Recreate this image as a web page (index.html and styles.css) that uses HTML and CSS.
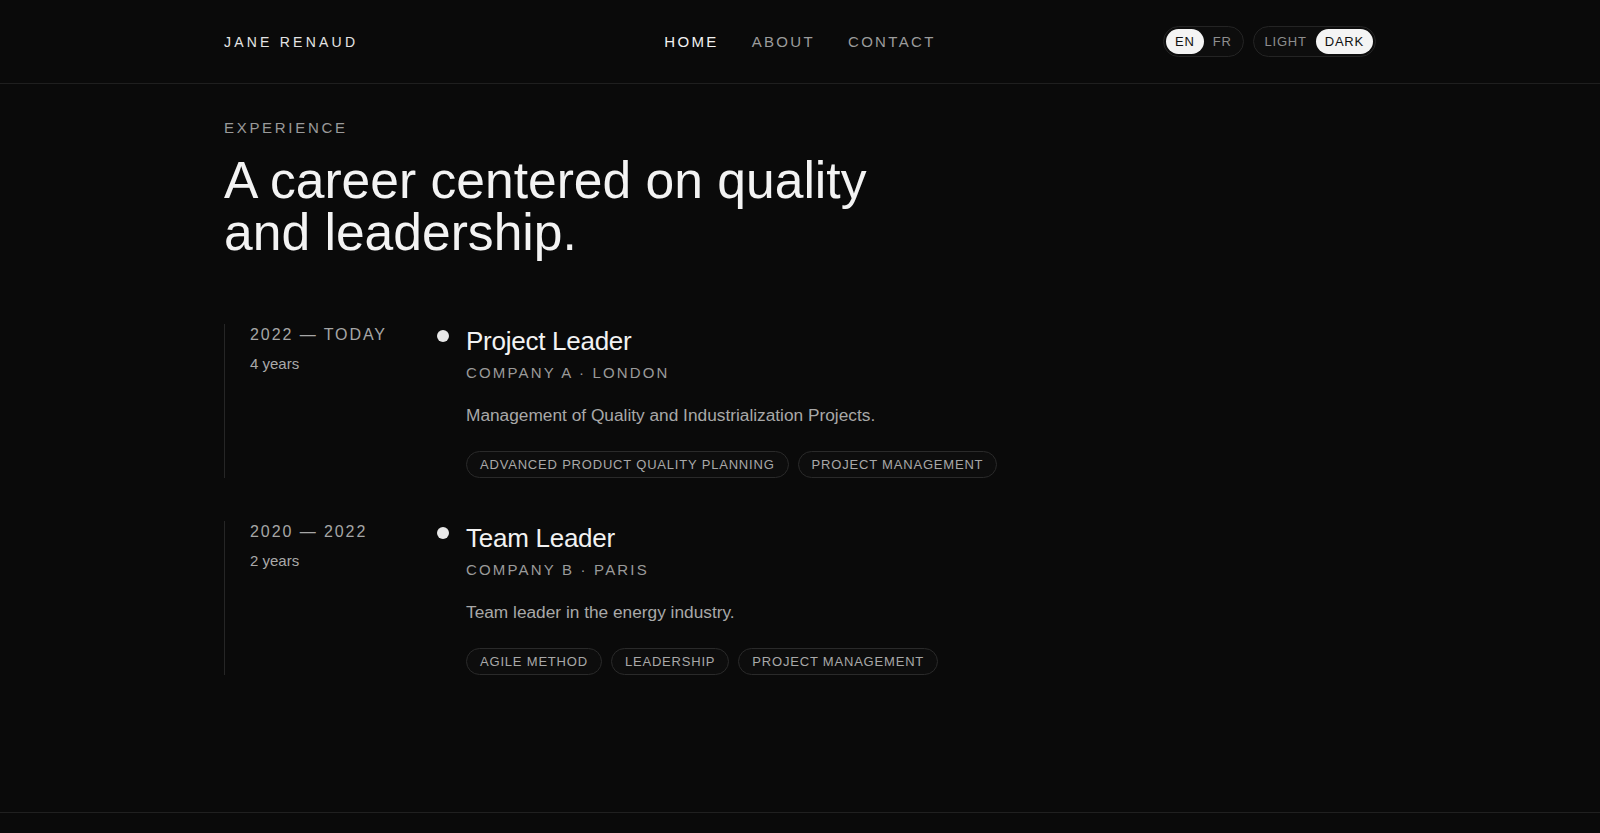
FILE: index.html
```html
<!DOCTYPE html>
<html lang="en">
<head>
<meta charset="utf-8">
<title>Jane Renaud — Experience</title>
<link rel="stylesheet" href="styles.css">
</head>
<body>
<header class="site-header">
  <div class="header-inner">
    <a class="brand" href="#">JANE RENAUD</a>
    <nav class="nav">
      <a class="nav-link is-active" href="#">HOME</a>
      <a class="nav-link" href="#">ABOUT</a>
      <a class="nav-link" href="#">CONTACT</a>
    </nav>
    <div class="toggles">
      <div class="pill">
        <button class="pill-btn is-on">EN</button>
        <button class="pill-btn">FR</button>
      </div>
      <div class="pill">
        <button class="pill-btn">LIGHT</button>
        <button class="pill-btn is-on">DARK</button>
      </div>
    </div>
  </div>
</header>

<main class="main">
  <section class="experience">
    <p class="eyebrow">EXPERIENCE</p>
    <h1 class="title">A career centered on quality<br>and leadership.</h1>

    <div class="timeline">
      <article class="job">
        <div class="job-when">
          <div class="job-dates">2022 — TODAY</div>
          <div class="job-duration">4 years</div>
        </div>
        <span class="job-dot"></span>
        <div class="job-body">
          <h2 class="job-role">Project Leader</h2>
          <div class="job-company">COMPANY A · LONDON</div>
          <p class="job-desc">Management of Quality and Industrialization Projects.</p>
          <ul class="tags">
            <li class="tag">ADVANCED PRODUCT QUALITY PLANNING</li>
            <li class="tag">PROJECT MANAGEMENT</li>
          </ul>
        </div>
      </article>

      <article class="job">
        <div class="job-when">
          <div class="job-dates">2020 — 2022</div>
          <div class="job-duration">2 years</div>
        </div>
        <span class="job-dot"></span>
        <div class="job-body">
          <h2 class="job-role">Team Leader</h2>
          <div class="job-company">COMPANY B · PARIS</div>
          <p class="job-desc">Team leader in the energy industry.</p>
          <ul class="tags">
            <li class="tag">AGILE METHOD</li>
            <li class="tag">LEADERSHIP</li>
            <li class="tag">PROJECT MANAGEMENT</li>
          </ul>
        </div>
      </article>
    </div>
  </section>
</main>

<footer class="site-footer">
  <div class="footer-inner"></div>
</footer>
</body>
</html>
```

FILE: styles.css
```css
* { box-sizing: border-box; }

html, body {
  margin: 0;
  padding: 0;
  background: #0a0a0a;
  color: #ededed;
  font-family: "Liberation Sans", Arial, sans-serif;
}

a { color: inherit; text-decoration: none; }

/* Header */
.site-header {
  height: 84px;
  border-bottom: 1px solid #1f1f1f;
}

.header-inner {
  width: 1152px;
  margin: 0 auto;
  height: 83px;
  display: grid;
  grid-template-columns: 1fr auto 1fr;
  align-items: center;
}

.brand {
  font-size: 14px;
  letter-spacing: 0.23em;
  color: #e4e4e4;
  justify-self: start;
}

.nav {
  display: flex;
  gap: 33px;
}

.nav-link {
  font-size: 15px;
  letter-spacing: 0.155em;
  color: #9c9c9c;
}

.nav-link.is-active { color: #f2f2f2; }

.toggles {
  justify-self: end;
  display: flex;
  gap: 9px;
}

.pill {
  display: flex;
  padding: 2px;
  border: 1px solid #242424;
  border-radius: 999px;
  background: #0d0d0d;
}

.pill-btn {
  font-family: inherit;
  font-size: 13px;
  letter-spacing: 0.06em;
  line-height: 25px;
  height: 25px;
  padding: 0 9px;
  border: 0;
  border-radius: 999px;
  background: transparent;
  color: #8e8e8e;
  cursor: pointer;
}

.pill-btn.is-on {
  background: #f4f4f4;
  color: #111111;
}

/* Main */
.main {
  padding: 34px 0 137px;
}

.experience {
  width: 1152px;
  margin: 0 auto;
}

.eyebrow {
  margin: 0 0 17px;
  font-size: 15px;
  line-height: 20px;
  letter-spacing: 0.18em;
  color: #9a9a9a;
}

.title {
  margin: 0 0 66px;
  font-size: 51.6px;
  line-height: 51.6px;
  font-weight: 400;
  letter-spacing: 0;
  color: #f3f3f3;
}

.timeline {
  display: flex;
  flex-direction: column;
  gap: 43px;
}

.job {
  display: flex;
  align-items: flex-start;
  border-left: 1px solid #262626;
  padding-left: 25px;
}

.job-when {
  width: 187px;
  flex: none;
}

.job-dates {
  font-size: 16px;
  line-height: 21px;
  letter-spacing: 0.12em;
  color: #a6a6a6;
}

.job-duration {
  margin-top: 8px;
  font-size: 15px;
  line-height: 22px;
  color: #a9a9a9;
}

.job-dot {
  flex: none;
  width: 12px;
  height: 12px;
  margin-top: 6px;
  margin-right: 17px;
  border-radius: 50%;
  background: #e8e8e8;
}

.job-body { flex: 1; }

.job-role {
  margin: 0;
  font-size: 26px;
  line-height: 35px;
  font-weight: 400;
  letter-spacing: -0.01em;
  color: #f2f2f2;
}

.job-company {
  margin-top: 4px;
  font-size: 15px;
  line-height: 20px;
  letter-spacing: 0.145em;
  color: #9a9a9a;
}

.job-desc {
  margin: 20px 0 0;
  font-size: 17.3px;
  line-height: 25px;
  color: #a8a8a8;
}

.tags {
  list-style: none;
  margin: 23px 0 0;
  padding: 0;
  display: flex;
  flex-wrap: wrap;
  gap: 9px;
}

.tag {
  font-size: 13px;
  line-height: 15px;
  letter-spacing: 0.062em;
  padding: 5px 13px;
  border: 1px solid #2a2a2a;
  border-radius: 999px;
  background: #0d0d0d;
  color: #a8a8a8;
}

/* Footer */
.site-footer {
  border-top: 1px solid #202020;
}

.footer-inner {
  width: 1152px;
  margin: 0 auto;
  height: 80px;
}
```
